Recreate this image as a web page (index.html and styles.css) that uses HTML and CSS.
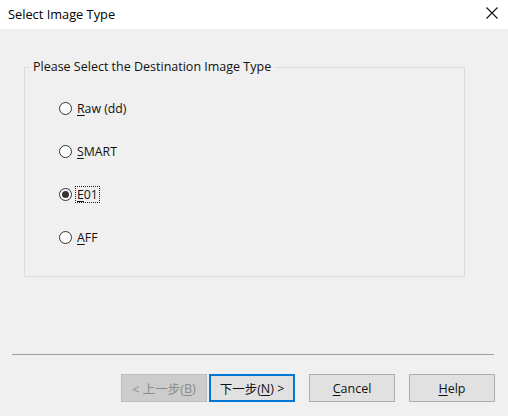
FILE: index.html
```html
<!DOCTYPE html>
<html>
<head>
<meta charset="utf-8">
<link rel="stylesheet" href="styles.css">
</head>
<body>
<div class="dialog">
  <div class="titlebar">
    <span class="title">Select Image Type</span>
    <svg class="close" width="12" height="12" viewBox="0 0 12 12"><path d="M0.5 0.5 L11.5 11.5 M11.5 0.5 L0.5 11.5" stroke="#111" stroke-width="1.1" fill="none"/></svg>
  </div>
  <div class="content">
    <fieldset class="group">
      <legend class="legend">Please Select the Destination Image Type</legend>
      <div class="options">
        <label class="opt"><span class="radio"></span><span class="txt"><u>R</u>aw (dd)</span></label>
        <label class="opt"><span class="radio"></span><span class="txt"><u>S</u>MART</span></label>
        <label class="opt"><span class="radio on"></span><span class="txt focus"><u>E</u>01</span></label>
        <label class="opt"><span class="radio"></span><span class="txt"><u>A</u>FF</span></label>
      </div>
    </fieldset>
  </div>
  <div class="sep"></div>
  <div class="buttons">
    <div class="btn disabled">&lt; 上一步(<u>B</u>)</div>
    <div class="btn default">下一步(<u>N</u>) &gt;</div>
    <div class="btn gap"><u>C</u>ancel</div>
    <div class="btn gap"><u>H</u>elp</div>
  </div>
</div>
</body>
</html>
```
FILE: styles.css
```css
html, body {
  margin: 0;
  padding: 0;
  background: #f0f0f0;
}
body {
  width: 508px;
  height: 416px;
  overflow: hidden;
  font-family: "Open Sans", "Noto Sans CJK SC", sans-serif;
  font-size: 12px;
  color: #111;
}
.dialog {
  display: flex;
  flex-direction: column;
  height: 416px;
}
.titlebar {
  height: 29px;
  background: #fff;
  display: flex;
  align-items: center;
  justify-content: space-between;
  padding: 0 10px 0 8px;
  flex: none;
}
.title {
  font-size: 12.8px;
  color: #000;
  margin-top: -1px;
}
.close {
  margin-top: -3px;
}
.content {
  box-sizing: border-box;
  padding: 30px 0 0 24px;
  height: 325px;
  flex: none;
}
.group {
  margin: 0;
  width: 441px;
  height: 218px;
  box-sizing: border-box;
  border: 1px solid #dcdcdc;
  padding: 0;
}
.legend {
  margin-left: 4px;
  padding: 0 4px;
  color: #111;
  font-size: 12.5px;
  line-height: 16px;
}
.options {
  display: flex;
  flex-direction: column;
  gap: 26px;
  padding: 25px 0 0 34px;
}
.opt {
  display: flex;
  align-items: center;
  height: 17px;
}
.radio {
  width: 11px;
  height: 11px;
  border: 1px solid #333;
  border-radius: 50%;
  background: #fff;
  box-sizing: content-box;
  display: flex;
  align-items: center;
  justify-content: center;
  margin-right: 3px;
}
.radio.on::after {
  content: "";
  width: 7px;
  height: 7px;
  border-radius: 50%;
  background: #333;
}
.txt {
  padding: 0 1px;
  border: 1px dotted transparent;
  line-height: 15px;
  font-size: 12.3px;
}
.txt.focus {
  border-color: #222;
}
u {
  text-decoration: underline;
  text-underline-offset: 2px;
}
.sep {
  margin: 0 14px 0 12px;
  height: 1px;
  background: #a0a0a0;
  flex: none;
}
.buttons {
  display: flex;
  padding: 19px 0 0 121px;
}
.btn {
  width: 86px;
  height: 28px;
  box-sizing: border-box;
  border: 1px solid #adadad;
  background: #e1e1e1;
  display: flex;
  align-items: center;
  justify-content: center;
  font-size: 12.5px;
  color: #111;
}
.btn.disabled {
  background: #cccccc;
  border-color: #bfbfbf;
  color: #8a8a8a;
}
.btn.default {
  margin-left: 2px;
  border: 2px solid #0078d7;
}
.btn.gap {
  margin-left: 14px;
}
```
